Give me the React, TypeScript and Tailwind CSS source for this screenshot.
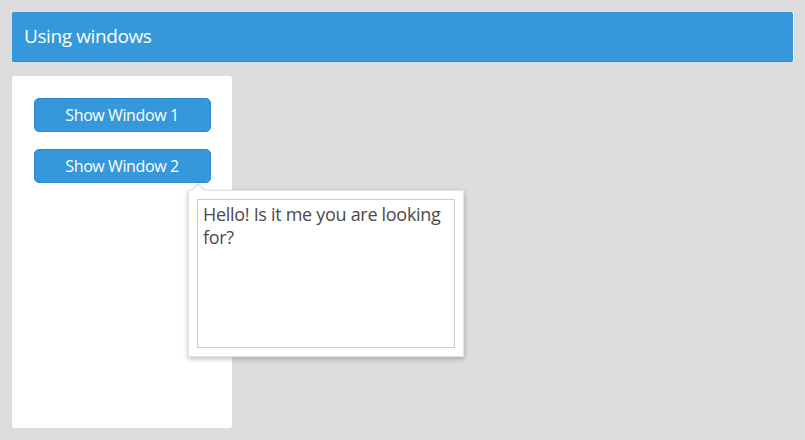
import React from "react";

const font = { fontFamily: '"Open Sans", "Noto Sans", sans-serif' };

export default function App(): JSX.Element {
  return (
    <div className="w-[805px] h-[440px] bg-[#dddddd] p-3 flex flex-col gap-[14px] overflow-hidden" style={font}>
      {/* header bar */}
      <div className="h-[50px] w-[781px] bg-[#3498db] border-b border-[#2d8ace] rounded-[2px] shadow-[1px_0_0_#ffffff] flex items-center px-3">
        <span className="text-white text-[19px] tracking-[-0.4px]">Using windows</span>
      </div>

      <div className="relative flex">
        {/* side panel */}
        <div className="w-[220px] h-[352px] bg-white rounded-[3px] flex flex-col items-center pt-[22px] gap-[17px]">
          <button className="w-[177px] h-[34px] bg-[#3498db] border border-[#2a8bd2] rounded-[5px] text-white text-[16px] tracking-[-0.4px]">
            Show Window 1
          </button>
          <button className="w-[177px] h-[34px] bg-[#3498db] border border-[#2a8bd2] rounded-[5px] text-white text-[16px] tracking-[-0.4px]">
            Show Window 2
          </button>
        </div>

        {/* popup window */}
        <div className="absolute left-[176px] top-[114px] w-[276px] h-[167px] bg-white border border-[#e2e2e2] shadow-[0_2px_5px_rgba(0,0,0,0.25)] p-2">
          <div className="absolute -top-[6px] left-[4px] w-[10px] h-[10px] bg-white border-l border-t border-[#d4d4d4] rotate-45" />
          <div className="relative w-full h-full border border-[#cccccc] pl-[5px] pr-2 pt-[3px] text-[18px] leading-[23px] text-[#4a4a4a] tracking-[-0.3px]">
            Hello! Is it me you are looking for?
          </div>
        </div>
      </div>
    </div>
  );
}
